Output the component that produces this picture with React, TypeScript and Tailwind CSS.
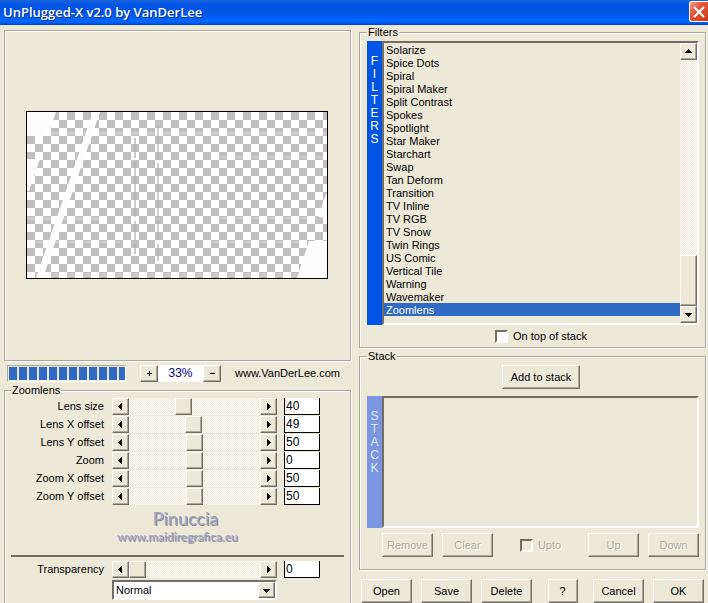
import React, { useState } from 'react';
import clsx from 'clsx';

const FILTERS = [
  'Solarize', 'Spice Dots', 'Spiral', 'Spiral Maker', 'Split Contrast', 'Spokes', 'Spotlight',
  'Star Maker', 'Starchart', 'Swap', 'Tan Deform', 'Transition', 'TV Inline', 'TV RGB', 'TV Snow',
  'Twin Rings', 'US Comic', 'Vertical Tile', 'Warning', 'Wavemaker', 'Zoomlens',
];

const PARAMS = [
  { label: 'Lens size', value: 40, min: 0, max: 100 },
  { label: 'Lens X offset', value: 49, min: 0, max: 100 },
  { label: 'Lens Y offset', value: 50, min: 0, max: 100 },
  { label: 'Zoom', value: 0, min: -50, max: 50 },
  { label: 'Zoom X offset', value: 50, min: 0, max: 100 },
  { label: 'Zoom Y offset', value: 50, min: 0, max: 100 },
];

const RAISED = 'bg-[#ece9d8] border border-t-white border-l-white border-r-[#716f64] border-b-[#716f64] shadow-[inset_-1px_-1px_0_#aca899]';
const SUNKEN = 'border-2 border-t-[#716f64] border-l-[#716f64] border-r-white border-b-white';
const ETCHED = 'border border-[#aca899] shadow-[inset_1px_1px_0_#fff,1px_1px_0_#fff]';
const DITHER = 'bg-[conic-gradient(#fbfaf5_25%,#efecde_0_50%,#fbfaf5_0_75%,#efecde_0)] bg-[length:2px_2px]';

const ARROWS = {
  left: 'M5 0v7H4V6H3V5H2V4H1V3h1V2h1V1h1V0z',
  right: 'M2 0v7h1V6h1V5h1V4h1V3H5V2H4V1H3V0z',
  up: 'M0 5h7V4H6V3H5V2H4V1H3v1H2v1H1v1H0z',
  down: 'M0 2h7v1H6v1H5v1H4v1H3V5H2V4H1V3H0z',
};

const Arrow = ({ dir }: { dir: keyof typeof ARROWS }) => (
  <svg viewBox="0 0 7 7" className="h-[7px] w-[7px]" shapeRendering="crispEdges" aria-hidden="true">
    <path d={ARROWS[dir]} fill="#000" />
  </svg>
);

const ArrowButton = ({ dir, label, onClick }: { dir: keyof typeof ARROWS; label: string; onClick?: () => void }) => (
  <button type="button" aria-label={label} onClick={onClick} className={clsx('flex h-[17px] w-[17px] shrink-0 items-center justify-center', RAISED)}>
    <Arrow dir={dir} />
  </button>
);

const PushButton = ({ children, disabled, className = 'w-[51px]' }: { children: React.ReactNode; disabled?: boolean; className?: string }) => (
  <button
    type="button"
    disabled={disabled}
    className={clsx('h-6 shrink-0 text-center', RAISED, disabled && 'text-[#aca899] [text-shadow:1px_1px_0_#fff]', className)}
  >
    {children}
  </button>
);

const CheckBox = ({ label, disabled }: { label: string; disabled?: boolean }) => (
  <label className={clsx('flex items-center gap-[5px]', disabled && 'text-[#aca899] [text-shadow:1px_1px_0_#fff]')}>
    <input
      type="checkbox"
      disabled={disabled}
      className={clsx('h-[13px] w-[13px] appearance-none checked:bg-[#316ac5]', SUNKEN, disabled ? 'bg-[#ece9d8]' : 'bg-white')}
    />
    {label}
  </label>
);

const Group = ({ title, className, children }: { title: string; className?: string; children: React.ReactNode }) => (
  <fieldset className={clsx('min-w-0 pr-[6px]', ETCHED, className)}>
    <legend className="bg-[#ece9d8] px-px leading-[13px]">{title}</legend>
    {children}
  </fieldset>
);

const SideLabel = ({ text, className }: { text: string; className: string }) => (
  <div className={clsx('flex w-[15px] shrink-0 flex-col items-center pt-[14px] text-[12px] leading-[13px]', className)}>
    {text.split('').map((letter, i) => (
      <span key={i}>{letter}</span>
    ))}
  </div>
);

const ParamRow = ({ label, value, min, max }: { label: string; value: number; min: number; max: number }) => {
  const [current, setCurrent] = useState(value);
  const update = (next: number) => setCurrent(Math.min(max, Math.max(min, next || 0)));
  const id = label.toLowerCase().replace(/ /g, '-');

  return (
    <div className="flex h-[17px] items-center pr-6">
      <label htmlFor={id} className="mr-2 w-[93px] shrink-0 text-right">{label}</label>
      <div className={clsx('mr-[7px] flex min-w-0 flex-1', DITHER)}>
        <ArrowButton dir="left" label={`Decrease ${label}`} onClick={() => update(current - 1)} />
        <input
          type="range"
          aria-label={label}
          min={min}
          max={max}
          value={current}
          onChange={(e) => update(Number(e.target.value))}
          className="h-[17px] w-0 min-w-0 flex-1 appearance-none bg-transparent [&::-webkit-slider-thumb]:h-[17px] [&::-webkit-slider-thumb]:w-[17px] [&::-webkit-slider-thumb]:appearance-none [&::-webkit-slider-thumb]:border [&::-webkit-slider-thumb]:border-t-white [&::-webkit-slider-thumb]:border-r-[#716f64] [&::-webkit-slider-thumb]:border-b-[#716f64] [&::-webkit-slider-thumb]:border-l-white [&::-webkit-slider-thumb]:bg-[#ece9d8] [&::-webkit-slider-thumb]:shadow-[inset_-1px_-1px_0_#aca899]"
        />
        <ArrowButton dir="right" label={`Increase ${label}`} onClick={() => update(current + 1)} />
      </div>
      <input
        id={id}
        type="text"
        value={current}
        onChange={(e) => update(Number(e.target.value))}
        className="h-[17px] w-9 shrink-0 border-x border-b border-black bg-white px-px text-[12px] leading-4"
      />
    </div>
  );
};

const Preview = () => (
  <svg width="302" height="168" viewBox="-1 -1 302 168" role="img" aria-label="Preview">
    <defs>
      <pattern id="checker" width="16" height="16" patternUnits="userSpaceOnUse">
        <rect width="16" height="16" fill="#fff" />
        <path d="M8 0h8v8H8zM0 8h8v8H0z" fill="#bfbfbf" />
      </pattern>
    </defs>
    <rect width="300" height="166" fill="url(#checker)" shapeRendering="crispEdges" />
    <g fill="#fff" opacity="0.18">
      <rect x="24" y="20" width="276" height="3" />
      <rect x="190" y="44" width="110" height="2" />
      <rect x="0" y="105" width="75" height="3" />
      <rect x="190" y="105" width="100" height="2" />
      <rect x="8" y="129" width="85" height="2" />
      <rect x="175" y="129" width="105" height="2" />
      <rect x="0" y="161" width="270" height="4" />
    </g>
    <g fill="#fdfdfd">
      <path d="M0 0h29l-5 15-8 9H0z" />
      <path d="M0 47h13L2 79H0z" />
      <path d="M66 0h7L16 166H9z" />
      <path d="M299 82h1v24l-9-1z" />
      <path d="M282 129h18v37h-30z" />
    </g>
    <g stroke="#b0b0b0" strokeWidth="2" opacity="0.6">
      <path d="M108 26v20M108 49v56M108 109v19M108 132v10" />
      <path d="M131 15v33M131 51v54M131 109v19M131 132v17" />
    </g>
    <rect x="-0.5" y="-0.5" width="301" height="167" fill="none" stroke="#000" />
  </svg>
);

export default function App() {
  const [selected, setSelected] = useState('Zoomlens');

  return (
    <div className="flex min-h-screen flex-col bg-[#ece9d8] font-['Liberation_Sans',Arial,sans-serif] text-[11px] leading-[13px] text-black">
      {/* Title bar */}
      <header className="flex h-[25px] shrink-0 items-center justify-between bg-[linear-gradient(#1a63dc,#0054e3_20%,#0055e5_50%,#0066ff_80%,#0062f5_90%,#003dd7)] pl-[3px]">
        <h1 className="font-['Open_Sans',sans-serif] text-[13px] font-semibold text-white [text-shadow:1px_1px_0_#0a2f8f]">UnPlugged-X v2.0 by VanDerLee</h1>
        <button type="button" aria-label="Close" className="mb-[2px] flex h-[21px] w-[19px] items-center justify-center rounded-l-[3px] border border-r-0 border-white bg-[linear-gradient(135deg,#ef9a80,#e2563a_40%,#c93a1c)]">
          <svg viewBox="0 0 12 12" className="h-3 w-3" aria-hidden="true">
            <path d="M1 1l10 10M11 1L1 11" stroke="#fff" strokeWidth="2" />
          </svg>
        </button>
      </header>

      <main className="grid flex-1 grid-cols-2 gap-2 pr-[2px] pl-1">
        {/* Preview and parameters */}
        <div className="flex min-w-0 flex-col pt-[5px]">
          <div className={clsx('flex h-[331px] shrink-0 items-center justify-center pr-[2px] pb-[2px]', ETCHED)}>
            <Preview />
          </div>

          <div className="mt-1 flex h-[17px] shrink-0 items-center pl-[3px]">
            <div role="progressbar" aria-label="Rendering" className="mr-[14px] flex h-[17px] w-[119px] items-center gap-[2px] overflow-hidden border border-t-[#aca899] border-r-white border-b-white border-l-[#aca899] p-px">
              {Array.from({ length: 12 }, (_, i) => (
                <span key={i} className="h-[13px] w-2 shrink-0 bg-[#316ac5]" />
              ))}
            </div>
            <button type="button" aria-label="Zoom in" className={clsx('flex h-[17px] w-[18px] items-center justify-center', RAISED)}>
              <svg viewBox="0 0 5 5" className="h-[5px] w-[5px]"><path d="M2 0h1v2h2v1H3v2H2V3H0V2h2z" /></svg>
            </button>
            <output className="h-[17px] w-[45px] bg-white text-center text-[12px] leading-4 text-[#000080]">33%</output>
            <button type="button" aria-label="Zoom out" className={clsx('flex h-[17px] w-[18px] items-center justify-center', RAISED)}>
              <svg viewBox="0 0 5 5" className="h-[5px] w-[5px]"><path d="M0 2h5v1H0z" /></svg>
            </button>
            <a href="#vanderlee" className="ml-[14px]">www.VanDerLee.com</a>
          </div>

          <Group title="Zoomlens" className="mt-[2px] flex-1 border-b-0 pl-[6px]">
            <div className="flex flex-col gap-px pt-px">
              {PARAMS.map((param) => (
                <ParamRow key={param.label} {...param} />
              ))}
            </div>

            <div className="mt-[2px] text-center font-['Lato',sans-serif] text-[#a3a3c4] [text-shadow:1px_1px_0_#8a8a94]">
              <p className="pl-4 text-[18px] leading-[22px]">Pinuccia</p>
              <p className="text-[12px] leading-[15px]">www.maidiregrafica.eu</p>
            </div>

            <hr className="mt-[11px] mb-1 border-t-2 border-[#716f64]" />

            <ParamRow label="Transparency" value={0} min={0} max={100} />
            <div className={clsx('mt-[2px] mr-[67px] ml-[101px] flex h-5 bg-white', SUNKEN)}>
              <select aria-label="Blend mode" className="min-w-0 flex-1 appearance-none bg-white pl-[2px]">
                <option>Normal</option>
              </select>
              <span className={clsx('flex w-[17px] items-center justify-center', RAISED)}>
                <Arrow dir="down" />
              </span>
            </div>
          </Group>
        </div>

        {/* Filter list and stack */}
        <div className="flex min-w-0 flex-col pt-px">
          <Group title="Filters" className="pl-[7px]">
            <div className="flex pt-[2px]">
              <SideLabel text="FILTERS" className="bg-[#0054e3] text-white" />
              <div className={clsx('flex h-[284px] min-w-0 flex-1', SUNKEN)}>
                <ul role="listbox" aria-label="Filters" className="min-w-0 flex-1">
                  {FILTERS.map((name) => (
                    <li
                      key={name}
                      role="option"
                      aria-selected={name === selected}
                      onClick={() => setSelected(name)}
                      className={clsx('h-[13px] pl-[2px] leading-[15px]', name === selected && 'bg-[#316ac5] text-white')}
                    >
                      {name}
                    </li>
                  ))}
                </ul>
                <div className={clsx('flex w-[17px] flex-col', DITHER)}>
                  <ArrowButton dir="up" label="Scroll up" />
                  <div className="flex-1" />
                  <div className={clsx('h-[51px]', RAISED)} />
                  <ArrowButton dir="down" label="Scroll down" />
                </div>
              </div>
            </div>
            <div className="flex h-[22px] items-center justify-center pl-4">
              <CheckBox label="On top of stack" />
            </div>
          </Group>

          <Group title="Stack" className="mt-[2px] pb-3 pl-[7px]">
            <div className="flex justify-center pt-[2px] pl-4">
              <PushButton className="w-[78px]">Add to stack</PushButton>
            </div>
            <div className="mt-[7px] flex">
              <SideLabel text="STACK" className="bg-[#7b96e0] text-[#dfe6fa]" />
              <div role="listbox" aria-label="Stack" className={clsx('h-[132px] min-w-0 flex-1', SUNKEN)} />
            </div>
            <div className="mt-[5px] flex items-center justify-between pl-[15px]">
              <div className="flex gap-[9px]">
                <PushButton disabled>Remove</PushButton>
                <PushButton disabled>Clear</PushButton>
              </div>
              <CheckBox label="Upto" disabled />
              <div className="flex gap-[9px]">
                <PushButton disabled>Up</PushButton>
                <PushButton disabled>Down</PushButton>
              </div>
            </div>
          </Group>

          <div className="mt-[9px] flex justify-between px-[2px]">
            <div className="flex gap-[9px]">
              <PushButton>Open</PushButton>
              <PushButton>Save</PushButton>
              <PushButton>Delete</PushButton>
            </div>
            <PushButton className="w-[30px]">?</PushButton>
            <div className="flex gap-[9px]">
              <PushButton>Cancel</PushButton>
              <PushButton>OK</PushButton>
            </div>
          </div>
        </div>
      </main>
    </div>
  );
}
